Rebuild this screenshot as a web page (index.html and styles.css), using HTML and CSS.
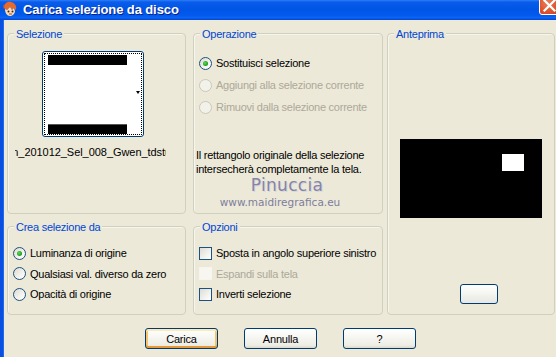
FILE: index.html
```html
<!DOCTYPE html>
<html lang="it">
<head>
<meta charset="utf-8">
<title>Carica selezione da disco</title>
<link rel="stylesheet" href="styles.css">
</head>
<body>
<div class="window">
  <div class="titlebar">
    <svg class="app-icon" width="16" height="16" viewBox="0 0 16 16">
      <path d="M2 7 C2 3 5 0 9 1 C13 2 15 5 14 9 L12 7 L10 9 L8 6 L5 9 L3 8 Z" fill="#E86A2A"/>
      <path d="M3 8 L5 9 L8 6 L10 9 L12 7 L13 10 C13 13 10 15 8 15 C5 15 3 12 3 8 Z" fill="#F8DCB6"/>
      <circle cx="6.5" cy="10.5" r="1" fill="#3A2A1A"/>
      <circle cx="10.5" cy="10.5" r="1" fill="#3A2A1A"/>
      <path d="M7 13 L10 13" stroke="#B2432A" stroke-width="1"/>
      <path d="M1 5 L3 3 L2 8 Z" fill="#D9541F"/>
    </svg>
    <span class="title">Carica selezione da disco</span>
    <div class="close">
      <svg width="21" height="21" viewBox="0 0 21 21">
        <path d="M5.5 5.5 L15.5 15.5 M15.5 5.5 L5.5 15.5" stroke="#fff" stroke-width="2.2" stroke-linecap="square"/>
      </svg>
    </div>
  </div>
  <div class="client">
    <div class="panels">
      <div class="left-grid">
        <section class="group sel">
          <span class="group-title">Selezione</span>
          <div class="thumb">
            <div class="focus">
              <div class="thumb-img">
                <div class="bar"></div>
                <div class="blank"></div>
                <div class="bar bar-bottom"></div>
              </div>
              <span class="drop-arrow"></span>
            </div>
          </div>
          <div class="filename"><span>Moon_201012_Sel_008_Gwen_tdstudio</span></div>
        </section>

        <section class="group op">
          <span class="group-title">Operazione</span>
          <div class="opts">
            <label class="row"><span class="radio checked"></span>Sostituisci selezione</label>
            <label class="row disabled"><span class="radio off"></span>Aggiungi alla selezione corrente</label>
            <label class="row disabled"><span class="radio off"></span>Rimuovi dalla selezione corrente</label>
          </div>
          <p class="info">Il rettangolo originale della selezione<br>intersecherà completamente la tela.</p>
          <div class="watermark">
            <span class="wm-name">Pinuccia</span>
            <span class="wm-url">www.maidiregrafica.eu</span>
          </div>
        </section>

        <section class="group crea">
          <span class="group-title">Crea selezione da</span>
          <div class="opts small">
            <label class="row"><span class="radio checked"></span>Luminanza di origine</label>
            <label class="row"><span class="radio"></span>Qualsiasi val. diverso da zero</label>
            <label class="row"><span class="radio"></span>Opacità di origine</label>
          </div>
        </section>

        <section class="group opz">
          <span class="group-title">Opzioni</span>
          <div class="opts small">
            <label class="row"><span class="check"></span>Sposta in angolo superiore sinistro</label>
            <label class="row disabled"><span class="check off"></span>Espandi sulla tela</label>
            <label class="row"><span class="check"></span>Inverti selezione</label>
          </div>
        </section>
      </div>

      <section class="group prev">
        <span class="group-title">Anteprima</span>
        <div class="canvas"><div class="sel-rect"></div></div>
        <button class="btn mini" type="button"></button>
      </section>
    </div>

    <div class="buttons">
      <button class="btn default" type="button">Carica</button>
      <button class="btn" type="button">Annulla</button>
      <button class="btn" type="button">?</button>
    </div>
  </div>
</div>
</body>
</html>
```

FILE: styles.css
```css
html, body {
  margin: 0;
  padding: 0;
}

body {
  width: 556px;
  height: 357px;
  overflow: hidden;
  background: #ECE9D8;
  font-family: "Liberation Sans", Arial, sans-serif;
  font-size: 11px;
  letter-spacing: -0.25px;
  color: #000;
}

.window {
  width: 562px;
  height: 357px;
  display: flex;
  flex-direction: column;
}

/* ---------- title bar ---------- */
.titlebar {
  height: 20px;
  flex: 0 0 20px;
  display: flex;
  align-items: flex-start;
  overflow: hidden;
  background: linear-gradient(#2F7DF6 0px, #0A5DEB 2px, #0055E5 45%, #0259EC 75%, #0A64F4 88%, #0345D2 100%);
}

.app-icon {
  margin: 1px 0 0 2px;
  flex: 0 0 16px;
}

.title {
  margin: 2px 0 0 5px;
  color: #fff;
  font-size: 13px;
  font-weight: bold;
  letter-spacing: -0.1px;
  line-height: 16px;
  text-shadow: 1px 1px 0 #0A1E8A;
}

.close {
  margin: -6px 2px 0 auto;
  width: 21px;
  height: 21px;
  box-sizing: border-box;
  border: 1px solid #fff;
  border-radius: 3px;
  background: radial-gradient(circle at 40% 40%, #E9805F 0, #E0542C 55%, #C6411E 100%);
  position: relative;
}

.close svg {
  position: absolute;
  left: -1px;
  top: 0;
}

/* ---------- client area ---------- */
.client {
  flex: 1;
  border-left: 3px solid #0A4FE0;
  box-shadow: inset 1px 0 0 #1C6CF2;
  padding: 13px 0 0 4px;
}

.panels {
  display: flex;
  gap: 4px;
}

.left-grid {
  display: grid;
  grid-template-columns: 179px 190px;
  grid-template-rows: 181px 89px;
  column-gap: 7px;
  row-gap: 12px;
}

.group {
  position: relative;
  box-sizing: border-box;
  border: 1px solid #D0D0BF;
  border-radius: 4px;
  box-shadow: inset 1px 1px 0 #F6F5EE;
}

.group-title {
  position: absolute;
  top: -6px;
  left: 6px;
  padding: 0 2px;
  line-height: 13px;
  background: #ECE9D8;
  color: #0046D5;
  white-space: nowrap;
}

/* ---------- Selezione ---------- */
.sel {
  padding: 17px 0 0 0;
}

.thumb {
  margin-left: 34px;
  width: 102px;
  height: 86px;
  box-sizing: border-box;
  border: 1px solid #003C74;
  border-radius: 3px;
  background: #fff;
  padding: 1px;
}

.focus {
  height: 100%;
  box-sizing: border-box;
  border: 1px dotted #000;
  display: flex;
  padding: 1px 0 0 3px;
}

.thumb-img {
  width: 79px;
  display: flex;
  flex-direction: column;
}

.bar {
  height: 10px;
  background: #000;
  flex: 0 0 10px;
}

.bar-bottom {
  border-top: 1px solid #555;
  box-sizing: border-box;
}

.blank {
  height: 59px;
  background: #fff;
}

.drop-arrow {
  margin: 36px 0 0 9px;
  width: 0;
  height: 0;
  border-left: 2.5px solid transparent;
  border-right: 2.5px solid transparent;
  border-top: 3px solid #000;
}

.filename {
  margin: 9px 0 0 7px;
  width: 151px;
  height: 13px;
  line-height: 13px;
  overflow: hidden;
  white-space: nowrap;
  letter-spacing: -0.05px;
}

.filename span {
  display: inline-block;
  margin-left: -24px;
}

/* ---------- option rows ---------- */
.op {
  padding: 18px 0 0 5px;
}

.opts {
  display: flex;
  flex-direction: column;
}

.row {
  height: 22px;
  display: flex;
  align-items: center;
  white-space: nowrap;
}

.opts.small .row {
  height: 20.5px;
}

.row.disabled {
  color: #ACA899;
}

.radio {
  width: 13px;
  height: 13px;
  flex: 0 0 13px;
  margin-right: 4px;
  box-sizing: border-box;
  border: 1px solid #1C5180;
  border-radius: 50%;
  background: linear-gradient(135deg, #DCD9CF 0%, #F4F3EE 60%, #FFFFFF 100%);
  display: flex;
  align-items: center;
  justify-content: center;
}

.radio.checked::after {
  content: "";
  width: 5px;
  height: 5px;
  border-radius: 50%;
  background: radial-gradient(circle at 40% 40%, #5EDB5E 0, #21A121 60%, #1A8A1A 100%);
}

.radio.off {
  border-color: #CAC8BB;
  background: #F3F2EA;
}

.check {
  width: 13px;
  height: 13px;
  flex: 0 0 13px;
  margin-right: 4px;
  box-sizing: border-box;
  border: 1px solid #1C5180;
  background: linear-gradient(135deg, #DCDCD7 0%, #F2F2EE 60%, #FFFFFF 100%);
}

.check.off {
  border-color: #F5F4EE;
  background: #F7F6F0;
}

.info {
  margin: 30px 0 0 -3px;
  line-height: 14px;
}

.watermark {
  position: absolute;
  left: 36px;
  top: 142px;
  width: 100px;
  display: flex;
  flex-direction: column;
  align-items: center;
  font-family: "DejaVu Sans", sans-serif;
  color: #8585A6;
  letter-spacing: 0;
  pointer-events: none;
}

.wm-name {
  font-size: 17px;
  line-height: 19px;
  letter-spacing: 0.3px;
  text-shadow: 1px 1px 0 #D8D6E0;
  margin-left: 14px;
}

.wm-url {
  font-size: 10.5px;
  line-height: 13px;
  white-space: nowrap;
  color: #7D7D9C;
  margin-top: 1px;
}

/* ---------- Crea / Opzioni ---------- */
.crea,
.opz {
  padding: 16px 0 0 5px;
}

/* ---------- Anteprima ---------- */
.prev {
  width: 168px;
  height: 282px;
  padding: 105px 0 0 12px;
}

.canvas {
  width: 142px;
  height: 79px;
  background: #000;
  padding: 15px 0 0 102px;
  box-sizing: border-box;
}

.sel-rect {
  width: 22px;
  height: 17px;
  background: #fff;
}

/* ---------- buttons ---------- */
.btn {
  font-family: "Liberation Sans", Arial, sans-serif;
  font-size: 11px;
  letter-spacing: -0.2px;
  color: #000;
  width: 73px;
  height: 21px;
  padding: 0;
  box-sizing: border-box;
  border: 1px solid #003C74;
  border-radius: 3px;
  background: linear-gradient(#FFFFFF 0%, #F7F7F3 40%, #EEEDE5 85%, #DCD8CC 100%);
}

.btn.default {
  box-shadow: inset 0 2px 0 #FFE9B5, inset 0 -2px 0 #E59A3A, inset 2px 0 0 #F8C46A, inset -2px 0 0 #F8C46A;
}

.btn.mini {
  display: block;
  width: 38px;
  height: 20px;
  margin: 66px 0 0 60px;
  background: linear-gradient(#FFFFFF 0%, #F4F4F0 50%, #E8E7E0 100%);
}

.buttons {
  display: flex;
  gap: 26px;
  margin: 13px 0 0 138px;
}
```
